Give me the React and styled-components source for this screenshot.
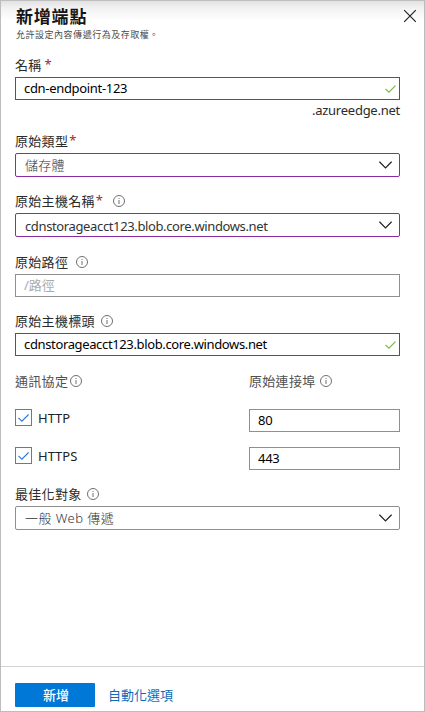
import React from "react";
import styled, { createGlobalStyle, css } from "styled-components";

const GlobalStyle = createGlobalStyle`
  *, *::before, *::after { box-sizing: border-box; }
  body { margin: 0; background: #fff; }
`;

const PURPLE = "#8a2da5";
const GRAY = "#8f8f8f";

const Panel = styled.div`
  width: 425px;
  height: 712px;
  display: flex;
  flex-direction: column;
  border: 1px solid #bdbdbd;
  background: linear-gradient(#e2e2e2 0, #f2f2f2 7px, #fff 20px);
  color: #2b2b2b;
  font-family: "Noto Sans", "Noto Sans CJK TC", sans-serif;
  font-size: 13px;
  white-space: nowrap;
  overflow: hidden;
`;

const Header = styled.header`
  display: flex;
  justify-content: space-between;
  height: 52px;
  flex: none;
  padding: 4px 7px 0 15px;
`;

const Title = styled.h1`
  margin: 0;
  height: 22px;
  line-height: 22px;
  font-family: "Noto Sans CJK TC", sans-serif;
  font-size: 17px;
  font-weight: 700;
  letter-spacing: 0.8px;
  color: #161616;
`;

const Subtitle = styled.p`
  margin: 1px 0 0;
  line-height: 14px;
  font-family: "Noto Sans CJK TC", sans-serif;
  font-size: 9px;
  letter-spacing: 0.52px;
  color: #4c4c4c;
`;

const CloseButton = styled.button`
  width: 14px;
  height: 14px;
  margin-top: 4px;
  padding: 0;
  border: 0;
  background: none;
  svg { display: block; }
`;

const Form = styled.main`
  flex: 1;
  padding: 0 24px 0 14px;
`;

const Field = styled.section`
  margin-top: ${(p) => p.$gap || 0}px;
`;

const Label = styled.label`
  display: flex;
  align-items: center;
  height: 24px;
  line-height: 24px;
  font-family: "Noto Sans CJK TC", sans-serif;
  font-size: 13px;
  letter-spacing: 0.3px;
  color: ${(p) => (p.$light ? "#505050" : "#2b2b2b")};
`;

const Required = styled.span`
  margin-left: ${(p) => p.$gap || 0}px;
  font-family: "Noto Sans", sans-serif;
  font-size: 13px;
  line-height: 22px;
  height: 24px;
  color: #a4262c;
`;

const InfoSvg = styled.svg`
  flex: none;
  margin-left: ${(p) => p.$gap}px;
`;

const control = css`
  display: flex;
  align-items: center;
  justify-content: space-between;
  border: 1px solid ${(p) => (p.$edited ? PURPLE : GRAY)};
  background: #fff;
`;

const InputBox = styled.div`
  ${control}
  height: 23px;
  padding: 0 3px 0 8px;
`;

const Input = styled.input`
  flex: 1;
  min-width: 0;
  height: 21px;
  padding: 0 0 2px;
  border: 0;
  outline: 0;
  background: none;
  color: #000;
  font: 13px "Noto Sans", "Noto Sans CJK TC", sans-serif;
  letter-spacing: ${(p) => p.$spacing || 0}px;
  &::placeholder { color: #ababab; opacity: 1; }
`;

const Select = styled.div`
  ${control}
  height: 24px;
  padding: 0 7px 0 9px;
  border-radius: 2px;
  color: #333;
`;

const Value = styled.span`
  line-height: 20px;
  font-weight: ${(p) => p.$weight || 400};
  letter-spacing: ${(p) => p.$spacing || 0}px;
  padding-top: ${(p) => p.$drop || 0}px;
`;

const Suffix = styled.div`
  height: 22px;
  line-height: 21px;
  text-align: right;
  letter-spacing: -0.25px;
`;

const PortGrid = styled.div`
  display: grid;
  grid-template-columns: 234px 151px;
  grid-template-rows: 23px 23px;
  row-gap: 15px;
  margin-top: 16px;
`;

const PortHead = styled(PortGrid)`
  grid-template-rows: 24px;
  margin-top: 13px;
`;

const CheckLabel = styled.label`
  display: flex;
  align-items: flex-start;
  gap: 6px;
  line-height: 19px;
  letter-spacing: 0;
  color: #222;
`;

const CheckBox = styled.span`
  display: grid;
  place-items: center;
  width: 17px;
  height: 17px;
  border: 1px solid #777;
`;

const Footer = styled.footer`
  display: flex;
  align-items: flex-start;
  gap: 13px;
  height: 45px;
  flex: none;
  padding: 16px 14px 0;
  border-top: 1px solid #d2d2d2;
  font-family: "Noto Sans CJK TC", sans-serif;
`;

const PrimaryButton = styled.button`
  width: 80px;
  height: 24px;
  padding: 0 0 0 2px;
  border: 0;
  border-radius: 1px;
  background: #0078d7;
  color: #fff;
  font: 500 13px/24px "Noto Sans CJK TC", sans-serif;
`;

const OptionsLink = styled.a`
  line-height: 24px;
  color: #0f6cbd;
`;

const Info = ({ gap }) => (
  <InfoSvg $gap={gap} width="12" height="12" viewBox="0 0 12 12" fill="none">
    <circle cx="6" cy="6" r="5.5" stroke="#707070" />
    <path d="M6 5v4" stroke="#707070" />
    <path d="M6 3v1" stroke="#707070" />
  </InfoSvg>
);

const Chevron = () => (
  <svg width="13" height="8" viewBox="0 0 13 8" fill="none">
    <path d="M.4.7 6.5 6.8 12.6.7" stroke="#222" strokeWidth="1.2" />
  </svg>
);

const Valid = () => (
  <svg width="11" height="8" viewBox="0 0 11 8" fill="none">
    <path d="M.6 4 4 7.2 10.4.6" stroke="#7fba4c" strokeWidth="1.2" />
  </svg>
);

const Tick = () => (
  <svg width="11" height="8" viewBox="0 0 11 8" fill="none">
    <path d="M.4 3.8 3.9 7.2 10.6.5" stroke="#2b78d8" strokeWidth="1.1" />
  </svg>
);

export default function App() {
  return (
    <>
      <GlobalStyle />
      <Panel>
        <Header>
          <div>
            <Title>新增端點</Title>
            <Subtitle>允許設定內容傳遞行為及存取權。</Subtitle>
          </div>
          <CloseButton aria-label="關閉">
            <svg width="14" height="14" viewBox="0 0 14 14" fill="none">
              <path d="m1.2 1.2 11.6 11.6M12.8 1.2 1.2 12.8" stroke="#222" strokeWidth="1.2" />
            </svg>
          </CloseButton>
        </Header>
        <Form>
          <Field>
            <Label>名稱<Required $gap={3}>*</Required></Label>
            <InputBox $edited>
              <Input defaultValue="cdn-endpoint-123" $spacing={-0.32} />
              <Valid />
            </InputBox>
            <Suffix>.azureedge.net</Suffix>
          </Field>
          <Field $gap={7}>
            <Label>原始類型<Required $gap={1}>*</Required></Label>
            <Select $edited><Value $spacing={0.2} $weight={300}>儲存體</Value><Chevron /></Select>
          </Field>
          <Field $gap={12}>
            <Label>原始主機名稱<Required $gap={1}>*</Required><Info gap={10} /></Label>
            <Select $edited>
              <Value $spacing={-0.37} $drop={1}>cdnstorageacct123.blob.core.windows.net</Value>
              <Chevron />
            </Select>
          </Field>
          <Field $gap={13}>
            <Label>原始路徑<Info gap={8} /></Label>
            <InputBox><Input placeholder="/路徑" /></InputBox>
          </Field>
          <Field $gap={12}>
            <Label>原始主機標頭<Info gap={6} /></Label>
            <InputBox $edited>
              <Input defaultValue="cdnstorageacct123.blob.core.windows.net" $spacing={-0.36} />
              <Valid />
            </InputBox>
          </Field>
          <PortHead>
            <Label $light>通訊協定<Info gap={2} /></Label>
            <Label $light>原始連接埠<Info gap={4} /></Label>
          </PortHead>
          <PortGrid>
            <CheckLabel><CheckBox><Tick /></CheckBox>HTTP</CheckLabel>
            <InputBox><Input defaultValue="80" $spacing={-0.3} /></InputBox>
            <CheckLabel><CheckBox><Tick /></CheckBox>HTTPS</CheckLabel>
            <InputBox><Input defaultValue="443" $spacing={-0.3} /></InputBox>
          </PortGrid>
          <Field $gap={12}>
            <Label>最佳化對象<Info gap={5} /></Label>
            <Select><Value $spacing={0.45} $weight={300}>一般 Web 傳遞</Value><Chevron /></Select>
          </Field>
        </Form>
        <Footer>
          <PrimaryButton>新增</PrimaryButton>
          <OptionsLink>自動化選項</OptionsLink>
        </Footer>
      </Panel>
    </>
  );
}
